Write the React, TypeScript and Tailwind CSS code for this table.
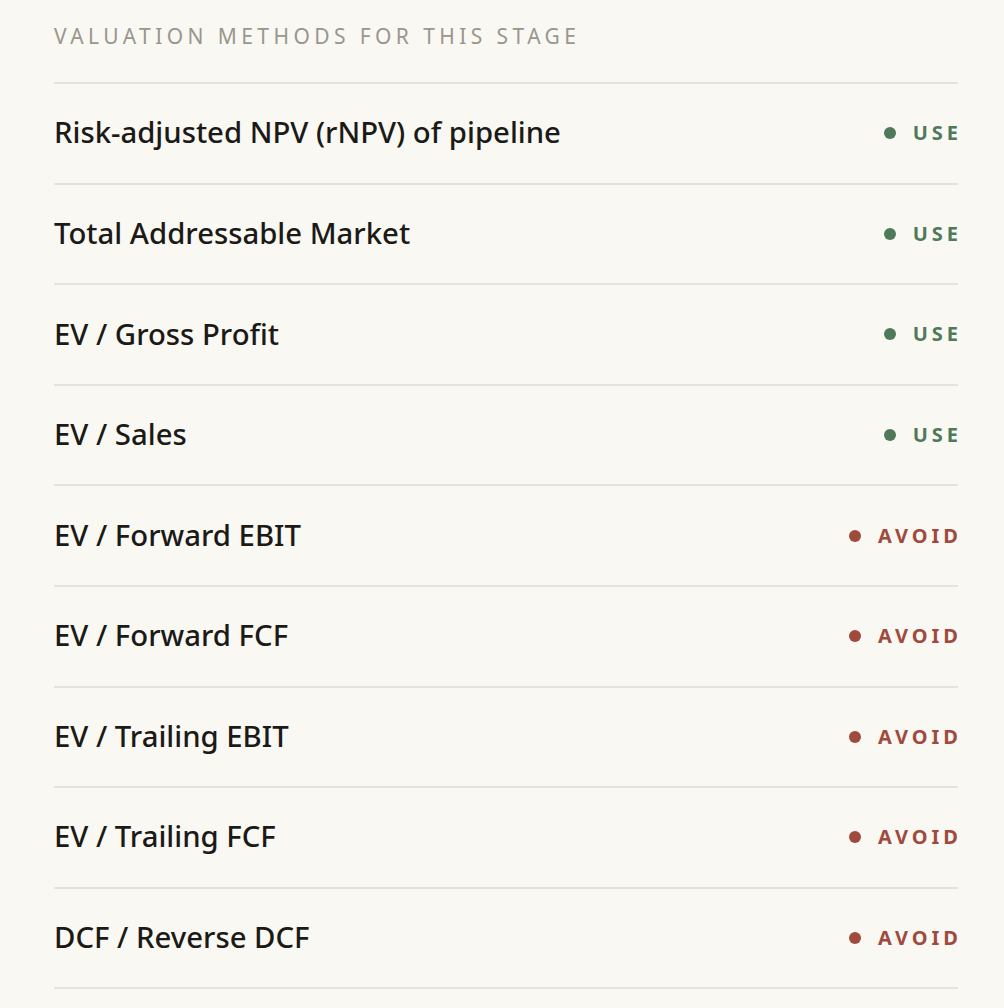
import React from "react";

const rows: { name: string; use: boolean }[] = [
  { name: "Risk-adjusted NPV (rNPV) of pipeline", use: true },
  { name: "Total Addressable Market", use: true },
  { name: "EV / Gross Profit", use: true },
  { name: "EV / Sales", use: true },
  { name: "EV / Forward EBIT", use: false },
  { name: "EV / Forward FCF", use: false },
  { name: "EV / Trailing EBIT", use: false },
  { name: "EV / Trailing FCF", use: false },
  { name: "DCF / Reverse DCF", use: false },
];

export default function App() {
  return (
    <div
      className="min-h-[1008px] w-full bg-[#f9f8f3] pl-[54px] pr-[46px] pt-[22px]"
      style={{ fontFamily: '"Noto Sans", "Open Sans", sans-serif' }}
    >
      <div className="h-[28px] text-[21px] leading-[28px] tracking-[0.21em] text-[#9a968d] uppercase">
        Valuation methods for this stage
      </div>
      <div className="mt-[32px] border-t-2 border-[#e5e3dc]">
        {rows.map((r) => (
          <div
            key={r.name}
            className="flex h-[100.6px] items-center justify-between border-b-2 border-[#e5e3dc]"
          >
            <span className="text-[29.3px] font-medium text-[#1c1a17]">{r.name}</span>
            <span
              className={
                "flex items-center gap-[17px] text-[20px] font-bold tracking-[0.2em] " +
                (r.use ? "text-[#4e7a5a]" : "text-[#a04a3e]")
              }
            >
              <span
                className={
                  "h-[12px] w-[12px] rounded-full " + (r.use ? "bg-[#4e7a5a]" : "bg-[#a04a3e]")
                }
              />
              <span className="-mr-[0.2em]">{r.use ? "USE" : "AVOID"}</span>
            </span>
          </div>
        ))}
      </div>
    </div>
  );
}
